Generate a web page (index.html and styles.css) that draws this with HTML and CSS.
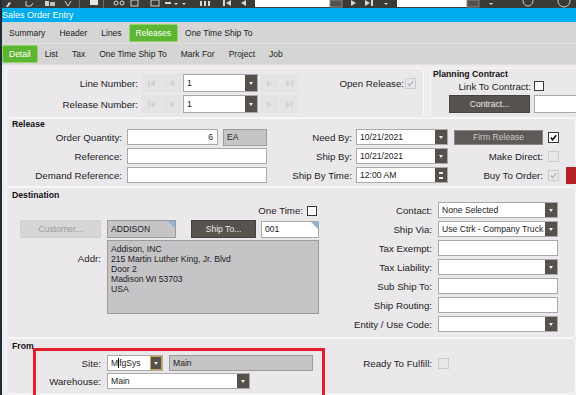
FILE: index.html
```html
<!DOCTYPE html>
<html>
<head>
<meta charset="utf-8">
<title>Sales Order Entry</title>
<link rel="stylesheet" href="styles.css">
</head>
<body>
<div class="app">
  <div class="toolbar">
    <svg width="574" height="8" viewBox="0 0 574 8">
      <rect width="574" height="8" fill="#3c3a37"/>
      <path d="M4 7 L7 2 L9 3 L6 7Z" fill="#d9d9d9"/>
      <path d="M24 1 L24 6 L29 6 L31 3" stroke="#cfcfcf" fill="none"/>
      <rect x="43" y="1" width="4" height="5" fill="#d0d0d0"/>
      <rect x="48" y="2" width="5" height="4" fill="#bdbdbd"/>
      <path d="M63 1 L66 6 L69 1" stroke="#cfcfcf" fill="none"/>
      <rect x="77" y="0" width="1" height="8" fill="#6d6b68"/>
      <rect x="88" y="0" width="8" height="5" fill="#e6e6e6"/>
      <rect x="101" y="0" width="1" height="8" fill="#6d6b68"/>
      <circle cx="114" cy="3" r="2" stroke="#d6d6d6" fill="none"/>
      <circle cx="120" cy="3" r="2" stroke="#d6d6d6" fill="none"/>
      <rect x="129" y="0" width="7" height="6" stroke="#cfcfcf" fill="none"/>
      <rect x="149" y="0" width="8" height="6" stroke="#cfcfcf" fill="none"/>
      <rect x="163" y="2" width="6" height="2" fill="#d6d6d6"/>
      <path d="M172 3 L176 3 L174 5Z" fill="#d6d6d6"/>
      <path d="M180 3 L184 3 L182 5Z" fill="#d6d6d6"/>
      <rect x="198" y="1" width="2" height="5" fill="#d6d6d6"/>
      <rect x="202" y="1" width="2" height="5" fill="#d6d6d6"/>
      <rect x="206" y="1" width="2" height="5" fill="#d6d6d6"/>
      <rect x="221" y="0" width="2" height="6" fill="#d6d6d6"/>
      <path d="M229 0 L224 3 L229 6Z" fill="#d6d6d6"/>
      <path d="M244 0 L239 3 L244 6Z" fill="#d6d6d6"/>
      <rect x="253" y="0" width="75" height="7" fill="#ffffff"/>
      <rect x="328" y="0" width="12" height="7" fill="#55504c" stroke="#8a8682"/>
      <path d="M349 0 L354 3 L349 6Z" fill="#d6d6d6"/>
      <path d="M363 0 L368 3 L363 6Z" fill="#d6d6d6"/>
      <rect x="369" y="0" width="2" height="6" fill="#d6d6d6"/>
      <path d="M382 3 L386 3 L384 5Z" fill="#d6d6d6"/>
      <rect x="395" y="0" width="70" height="7" fill="#ffffff"/>
      <rect x="465" y="0" width="12" height="7" fill="#55504c" stroke="#8a8682"/>
      <path d="M487 3 L491 3 L489 5Z" fill="#d6d6d6"/>
      <circle cx="526" cy="1" r="5" stroke="#cfcfcf" fill="none"/>
      <circle cx="562" cy="1" r="6" stroke="#cfcfcf" fill="none"/>
    </svg>
  </div>
  <div class="titlebar">Sales Order Entry</div>
  <div class="tabs tabs1">
    <span class="tab">Summary</span>
    <span class="tab">Header</span>
    <span class="tab">Lines</span>
    <span class="tab on">Releases</span>
    <span class="tab">One Time Ship To</span>
  </div>
  <div class="tabs tabs2">
    <span class="tab on">Detail</span>
    <span class="tab">List</span>
    <span class="tab">Tax</span>
    <span class="tab">One Time Ship To</span>
    <span class="tab">Mark For</span>
    <span class="tab">Project</span>
    <span class="tab">Job</span>
  </div>

  <div class="content">
    <div class="toprow">
      <section class="panel p-line">
        <div class="g-line">
          <span class="lbl">Line Number:</span>
          <div class="nav">
            <span class="nb"><svg viewBox="0 0 9 9"><rect x="1" y="1" width="1.5" height="7"/><path d="M8 1 L3 4.5 L8 8Z"/></svg></span>
            <span class="nb"><svg viewBox="0 0 9 9"><path d="M7 1 L2 4.5 L7 8Z"/></svg></span>
          </div>
          <div class="combo tall"><span class="val">1</span><span class="arr"></span></div>
          <div class="nav nav-r">
            <span class="nb"><svg viewBox="0 0 9 9"><path d="M2 1 L7 4.5 L2 8Z"/></svg></span>
            <span class="nb"><svg viewBox="0 0 9 9"><path d="M1 1 L6 4.5 L1 8Z"/><rect x="6.5" y="1" width="1.5" height="7"/></svg></span>
          </div>
          <span class="lbl lbl-open">Open Release:</span>
          <span class="cb dis"><svg viewBox="0 0 10 10"><path d="M2 5 L4 7.5 L8 2.5"/></svg></span>

          <span class="lbl">Release Number:</span>
          <div class="nav">
            <span class="nb"><svg viewBox="0 0 9 9"><rect x="1" y="1" width="1.5" height="7"/><path d="M8 1 L3 4.5 L8 8Z"/></svg></span>
            <span class="nb"><svg viewBox="0 0 9 9"><path d="M7 1 L2 4.5 L7 8Z"/></svg></span>
          </div>
          <div class="combo tall"><span class="val">1</span><span class="arr"></span></div>
          <div class="nav nav-r">
            <span class="nb"><svg viewBox="0 0 9 9"><path d="M2 1 L7 4.5 L2 8Z"/></svg></span>
            <span class="nb"><svg viewBox="0 0 9 9"><path d="M1 1 L6 4.5 L1 8Z"/><rect x="6.5" y="1" width="1.5" height="7"/></svg></span>
          </div>
        </div>
      </section>
      <section class="panel p-plan">
        <div class="ptitle">Planning Contract</div>
        <div class="g-plan">
          <span class="lbl lbl-link">Link To Contract:</span>
          <span class="cb"></span>
          <span class="btn btn-contract">Contract...</span>
          <span class="inp inp-contract"></span>
        </div>
      </section>
    </div>

    <section class="panel p-release">
      <div class="ptitle">Release</div>
      <div class="g-release">
        <span class="lbl">Order Quantity:</span>
        <div class="qty"><span class="inp inp-qty">6</span><span class="ro ro-ea">EA</span></div>
        <span class="lbl">Need By:</span>
        <div class="combo w92"><span class="val">10/21/2021</span><span class="arr"></span></div>
        <span class="btn btn-firm">Firm Release</span>
        <span class="cb"><svg viewBox="0 0 10 10"><path d="M2 5 L4 7.5 L8 2.5"/></svg></span>
        <span></span>

        <span class="lbl">Reference:</span>
        <span class="inp"></span>
        <span class="lbl">Ship By:</span>
        <div class="combo w92"><span class="val">10/21/2021</span><span class="arr"></span></div>
        <span class="lbl">Make Direct:</span>
        <span class="cb dis"></span>
        <span></span>

        <span class="lbl">Demand Reference:</span>
        <span class="inp"></span>
        <span class="lbl">Ship By Time:</span>
        <div class="combo w92"><span class="val">12:00 AM</span><span class="arr spin"></span></div>
        <span class="lbl">Buy To Order:</span>
        <span class="cb dis"><svg viewBox="0 0 10 10"><path d="M2 5 L4 7.5 L8 2.5"/></svg></span>
        <span class="redbox"></span>
      </div>
    </section>

    <section class="panel p-dest">
      <div class="ptitle">Destination</div>
      <div class="g-form g-dest">
        <div class="onetime"><span>One Time:</span><span class="cb"></span></div>
        <span class="btn btn-dis btn-cust">Customer...</span>
        <div class="custgrp">
          <span class="ro ro-addison corner">ADDISON</span>
          <span class="btn btn-shipto">Ship To...</span>
          <span class="inp inp-001 corner">001</span>
        </div>
        <span class="lbl lbl-addr">Addr:</span>
        <div class="ro addr">
          <div>Addison, INC</div>
          <div>215 Martin Luther King, Jr. Blvd</div>
          <div>Door 2</div>
          <div>Madison WI 53703</div>
          <div>USA</div>
        </div>

        <span class="lbl rl">Contact:</span>
        <div class="combo ri"><span class="val">None Selected</span><span class="arr"></span></div>
        <span class="lbl rl">Ship Via:</span>
        <div class="combo ri"><span class="val">Use Ctrk - Company Truck</span><span class="arr"></span></div>
        <span class="lbl rl">Tax Exempt:</span>
        <span class="inp ri"></span>
        <span class="lbl rl">Tax Liability:</span>
        <div class="combo ri"><span class="val"></span><span class="arr"></span></div>
        <span class="lbl rl">Sub Ship To:</span>
        <span class="inp ri"></span>
        <span class="lbl rl">Ship Routing:</span>
        <span class="inp ri"></span>
        <span class="lbl rl">Entity / Use Code:</span>
        <div class="combo ri"><span class="val"></span><span class="arr"></span></div>
      </div>
    </section>

    <section class="panel p-from">
      <div class="ptitle">From</div>
      <div class="g-form g-from">
        <span class="lbl">Site:</span>
        <div class="sitegrp">
          <div class="combo w56"><span class="val">M<span class="caret"></span>fgSys</span><span class="arr focus"></span></div>
          <span class="ro ro-main">Main</span>
        </div>
        <span class="lbl">Ready To Fulfill:</span>
        <span class="cb dis"></span>

        <span class="lbl">Warehouse:</span>
        <div class="combo w143"><span class="val">Main</span><span class="arr"></span></div>
      </div>
    </section>

    <div class="highlight"></div>
  </div>
</div>
</body>
</html>
```

FILE: styles.css
```css
* { box-sizing: border-box; margin: 0; padding: 0; }

html, body {
  width: 576px;
  height: 395px;
  overflow: hidden;
}

body {
  font-family: "Liberation Sans", Arial, sans-serif;
  font-size: 9.7px;
  color: #1c1c1c;
  background: #efecef;
}

.app {
  height: 395px;
  overflow: hidden;
  border-left: 2px solid #1f2c36;
  display: flex;
  flex-direction: column;
}

.toolbar { height: 8px; line-height: 0; flex: none; }
.toolbar svg { display: block; }

.titlebar {
  height: 14px;
  flex: none;
  background: #00adef;
  color: #fff;
  font-size: 9px;
  line-height: 14px;
}

/* tabs */
.tabs {
  display: flex;
  background: #d5d5d5;
  border-bottom: 1px solid #e4dfdb;
  flex: none;
}
.tabs1 { height: 22px; padding-top: 2px; padding-bottom: 1px; }
.tabs2 { height: 21px; padding-top: 1px; padding-bottom: 1px; }

.tab {
  font-size: 8.5px;
  line-height: 16px;
  padding: 0 6px;
  border: 1px solid transparent;
  border-radius: 2px;
  color: #222;
  white-space: nowrap;
}
.tab.on {
  background: #5db632;
  border-color: #93d46e;
  color: #fff;
}

/* content */
.content {
  position: relative;
  flex: 1;
  padding: 3px 0 0 4px;
  overflow: hidden;
}

.panel {
  background: #ebe8eb;
  border: 1px solid #f8f7f8;
  border-radius: 4px;
}

.ptitle {
  font-weight: bold;
  font-size: 8.7px;
  line-height: 10px;
  height: 10px;
  padding-left: 5px;
  color: #111;
}

.lbl {
  display: flex;
  align-items: center;
  justify-content: flex-end;
  white-space: nowrap;
}

/* generic controls */
.inp {
  display: block;
  height: 16px;
  background: #fff;
  border: 1px solid #a9a9a9;
  font-size: 8.6px;
  line-height: 14px;
  padding: 0 3px;
  white-space: nowrap;
  overflow: hidden;
}

.ro {
  display: block;
  height: 17px;
  background: #c6c4c6;
  border: 1px solid #9c9a9c;
  font-size: 8.6px;
  line-height: 15px;
  padding: 0 3px;
  white-space: nowrap;
}

.combo {
  display: flex;
  height: 16px;
  background: #fff;
  border: 1px solid #a9a9a9;
}
.combo.tall { height: 18px; }
.combo .val {
  flex: 1;
  font-size: 8.6px;
  padding-left: 3px;
  display: flex;
  align-items: center;
  white-space: nowrap;
  overflow: hidden;
}
.combo .arr {
  width: 12px;
  flex: none;
  background: #56514d;
  display: flex;
  align-items: center;
  justify-content: center;
}
.combo .arr::after {
  content: "";
  border-left: 2.5px solid transparent;
  border-right: 2.5px solid transparent;
  border-top: 3px solid #f2f2f2;
}
.combo .arr.spin {
  flex-direction: column;
  justify-content: center;
  gap: 3px;
}
.combo .arr.spin::before,
.combo .arr.spin::after {
  content: "";
  width: 4px;
  height: 2px;
  background: #eaeaea;
  border: 0;
}
.combo .arr.focus { border: 1px solid #c9a547; }

.caret {
  display: inline-block;
  width: 1px;
  height: 10px;
  background: #111;
}

.btn {
  display: block;
  background: #58534f;
  border: 1px solid #46423f;
  color: #e9e9e9;
  font-size: 8.6px;
  text-align: center;
  white-space: nowrap;
}
.btn-dis {
  background: #d7d5d7;
  border-color: #d2d0d2;
  color: #9b9b9b;
}

.cb {
  width: 11px;
  height: 11px;
  background: #fff;
  border: 1px solid #3a3a3a;
  align-self: center;
  display: block;
}
.cb svg { display: block; width: 9px; height: 9px; }
.cb svg path { fill: none; stroke: #111; stroke-width: 1.8; }
.cb.dis { background: #e9e7e9; border-color: #cdcbcd; }
.cb.dis svg path { stroke: #b9b7b9; stroke-width: 1.4; }

.corner { position: relative; }
.corner::after {
  content: "";
  position: absolute;
  top: 0;
  right: 0;
  border-style: solid;
  border-width: 0 7px 7px 0;
  border-color: transparent #8db2dc transparent transparent;
}

/* top row */
.toprow {
  display: flex;
  gap: 6px;
  height: 50px;
}

.p-line {
  width: 418px;
  flex: none;
  padding-top: 5px;
}
.g-line {
  display: grid;
  grid-template-columns: 135px 41px 75px 42px 105px 14px;
  grid-template-rows: 18px 18px;
  row-gap: 3px;
}
.g-line > .lbl { padding-right: 4px; }
.g-line > .lbl-open { padding-right: 1px; }
.nav { display: flex; gap: 1px; }
.nav-r { padding-left: 2px; }
.nb {
  width: 19px;
  height: 18px;
  background: #e5e3e5;
  display: flex;
  align-items: center;
  justify-content: center;
}
.nb svg { width: 9px; height: 9px; fill: #d3d1d3; }

.p-plan {
  flex: 1;
  margin-right: -10px;
  padding-left: 2px;
}
.p-plan .ptitle { padding-left: 0; }
.g-plan {
  display: grid;
  grid-template-columns: 101px 1fr;
  grid-template-rows: 14px 18px;
  row-gap: 2px;
}
.lbl-link { padding-right: 3px; }
.g-plan .cb { width: 10px; height: 10px; }
.btn-contract {
  width: 81px;
  justify-self: end;
  margin-right: 4px;
  height: 18px;
  line-height: 16px;
}
.inp-contract { height: 18px; }

/* release */
.p-release {
  padding-bottom: 2px;
}
.g-release {
  display: grid;
  grid-template-columns: 120px 140px 89px 98px 94px 18px 1fr;
  grid-template-rows: 17px 17px 17px;
  row-gap: 2px;
}
.g-release > .lbl:nth-child(7n+1) { padding-right: 5px; }
.g-release > .lbl:nth-child(7n+3) { padding-right: 4px; }
.g-release > .lbl:nth-child(7n+5) { padding-right: 5px; }
.g-release .combo, .g-release .inp { align-self: start; }
.w92 { width: 92px; }
.qty { display: flex; gap: 5px; }
.inp-qty { width: 91px; text-align: right; padding-right: 4px; }
.ro-ea { width: 44px; }
.btn-firm {
  width: 89px;
  height: 15px;
  line-height: 13px;
  margin-top: 1px;
  background: #5f5a57;
  border-color: #8b8683;
  color: #cbcbcb;
}
.redbox {
  width: 12px;
  height: 17px;
  background: #b51f25;
}

/* destination / from */
.p-dest {
  padding-top: 2px;
  padding-bottom: 4px;
}
.g-form {
  display: grid;
  grid-template-columns: 100px 212px 119px 120px;
}
.g-dest {
  margin-top: 2px;
  grid-template-rows: repeat(7, 17px);
  row-gap: 2px;
}
.g-form > .lbl { padding-right: 6px; }
.g-form > .rl { grid-column: 3; }
.g-form > .ri { grid-column: 4; }

.onetime {
  grid-row: 1;
  grid-column: 2;
  display: flex;
  justify-content: flex-end;
  align-items: center;
  gap: 4px;
  padding-right: 2px;
}
.onetime .cb { width: 10px; height: 10px; }

.btn-cust {
  grid-row: 2;
  grid-column: 1;
  width: 81px;
  height: 18px;
  line-height: 16px;
  justify-self: end;
  margin-right: 6px;
  margin-top: -1px;
}
.custgrp {
  grid-row: 2;
  grid-column: 2;
  display: flex;
  margin-top: -1px;
}
.ro-addison { width: 69px; height: 18px; line-height: 16px; }
.btn-shipto {
  width: 65px;
  height: 18px;
  line-height: 16px;
  margin-left: 15px;
}
.inp-001 { width: 58px; height: 17px; margin-left: 5px; margin-top: 1px; }

.lbl-addr {
  grid-row: 3;
  grid-column: 1;
  align-items: flex-start;
  padding-top: 13px;
}
.addr {
  grid-row: 3 / 7;
  grid-column: 2;
  height: 74px;
  line-height: 10px;
  padding: 3px 3px;
}

.p-from {
  padding-top: 2px;
  height: 56px;
}
.g-from {
  margin-top: 4px;
  grid-template-rows: 16px 16px;
  row-gap: 2px;
}
.sitegrp { display: flex; gap: 6px; }
.w56 { width: 56px; }
.w143 { width: 143px; }
.ro-main { width: 144px; height: 16px; line-height: 14px; }
.g-from .cb { justify-self: start; }

.highlight {
  position: absolute;
  left: 31px;
  top: 283px;
  width: 292px;
  height: 47px;
  border: 3px solid #e41f2a;
  border-bottom: 0;
}
```
